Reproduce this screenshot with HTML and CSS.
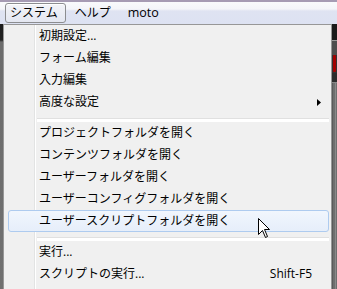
FILE: index.html
```html
<!DOCTYPE html>
<html lang="ja">
<head>
    <meta charset="UTF-8">
    <title>システム メニュー</title>
    <link rel="stylesheet" href="styles.css">
</head>
<body>
    <header class="menubar">
        <span class="menubar-item active">システム</span>
        <span class="menubar-item">ヘルプ</span>
        <span class="menubar-item latin">moto</span>
    </header>
    <div class="workspace">
        <div class="edge-left"></div>
        <ul class="dropdown">
            <li class="menu-item"><span>初期設定...</span></li>
            <li class="menu-item"><span>フォーム編集</span></li>
            <li class="menu-item"><span>入力編集</span></li>
            <li class="menu-item"><span>高度な設定</span>
                <svg class="submenu-arrow" width="4" height="7" viewBox="0 0 4 7"><polygon points="0,0 4,3.5 0,7" fill="#000"/></svg>
            </li>
            <li class="separator"></li>
            <li class="menu-item"><span>プロジェクトフォルダを開く</span></li>
            <li class="menu-item"><span>コンテンツフォルダを開く</span></li>
            <li class="menu-item"><span>ユーザーフォルダを開く</span></li>
            <li class="menu-item"><span>ユーザーコンフィグフォルダを開く</span></li>
            <li class="menu-item hover"><span>ユーザースクリプトフォルダを開く</span>
                <svg class="cursor" width="13" height="21" viewBox="0 0 13 21">
                    <path d="M0.5,0.5 L0.5,16.5 L4.5,12.5 L7.5,19.5 L9.5,18.5 L6.5,11.5 L11.5,11.5 Z" fill="#fff" stroke="#000" stroke-width="1" stroke-linejoin="miter"/>
                </svg>
            </li>
            <li class="separator"></li>
            <li class="menu-item"><span>実行...</span></li>
            <li class="menu-item"><span>スクリプトの実行...</span><span class="shortcut">Shift-F5</span></li>
        </ul>
        <div class="edge-right">
            <div class="panel-top"></div>
            <div class="panel-mid"></div>
            <div class="panel-red"><span class="red-mark"></span></div>
            <div class="panel-dark"></div>
            <div class="panel-rest"></div>
        </div>
    </div>
</body>
</html>
```

FILE: styles.css
```css
body {
    margin: 0;
    width: 337px;
    height: 289px;
    overflow: hidden;
    background: #3c3c3c;
    font-family: 'Open Sans', 'Noto Sans CJK JP', sans-serif;
    font-size: 12px;
    color: #000;
}
.menubar {
    height: 22px;
    border-top: 2px solid #a69bb3;
    background: linear-gradient(to bottom, #f9fafc 0px, #f4f5f9 7px, #dfe3f2 9px, #dde2f2 22px);
    display: flex;
    align-items: center;
}
.menubar-item {
    margin-left: 8px;
    padding: 0 1px;
    line-height: 18px;
}
.menubar-item.active {
    margin-left: 5px;
    padding: 0 7px 0 4px;
    border: 1px solid #8c8d90;
    border-radius: 3px;
    background: linear-gradient(to bottom, #f3f4f8, #e4e7f1);
    box-shadow: inset 0 1px 0 #fff;
}
.menubar-item.latin {
    margin-left: 15px;
    font-size: 12.5px;
}
.workspace {
    display: flex;
    height: 265px;
}
.edge-left {
    width: 3px;
    background: linear-gradient(to bottom, #1c1c1c 0px, #222 16px, #6c6c6c 18px, #707070 265px);
}
.dropdown {
    list-style: none;
    margin: 0;
    padding: 0 2px 0 4px;
    border: 1px solid #979797;
    border-bottom: none;
    box-sizing: border-box;
    width: 329px;
    background-color: #f0f0f0;
    background-image: linear-gradient(to right, transparent 30px, #e2e3e3 30px, #e2e3e3 31px, #fff 31px, #fff 32px, transparent 32px);
}
.menu-item {
    position: relative;
    display: flex;
    align-items: center;
    justify-content: space-between;
    height: 20px;
    line-height: 20px;
    padding-left: 30px;
    border: 1px solid transparent;
    border-radius: 3px;
    white-space: nowrap;
}
.menu-item.hover {
    border-color: #aecbef;
    background: linear-gradient(to bottom, #f1f6fd, #e6eefa);
}
.submenu-arrow {
    margin-right: 7px;
}
.shortcut {
    margin-right: 16px;
}
.separator {
    height: 9px;
    margin-left: 29px;
    box-sizing: border-box;
    border-bottom: 1px solid #fff;
    background: linear-gradient(to bottom, transparent 5px, #e0e0e0 5px, #e0e0e0 6px, #fff 6px);
}
.cursor {
    position: absolute;
    left: 249px;
    top: 7px;
}
.edge-right {
    flex: 1;
    display: flex;
    flex-direction: column;
}
.panel-top {
    height: 16px;
    background: #1b1b1b;
    border-bottom: 1px solid #9a9a9a;
}
.panel-mid {
    height: 14px;
    background: #4e4e4e;
}
.panel-red {
    height: 18px;
    background: #333;
    padding-left: 1px;
}
.red-mark {
    display: block;
    width: 3px;
    height: 17px;
    background: #a40000;
    border-radius: 1px;
}
.panel-dark {
    height: 9px;
    background: #2b2b2b;
    border-bottom: 1px solid #888;
}
.panel-rest {
    flex: 1;
    background: linear-gradient(to right, #5a5a5a 0px, #5a5a5a 1px, #6e6e6e 1px, #6e6e6e 3px, #8a8a8a 3px, #8a8a8a 4px, #6e6e6e 4px);
}
```
